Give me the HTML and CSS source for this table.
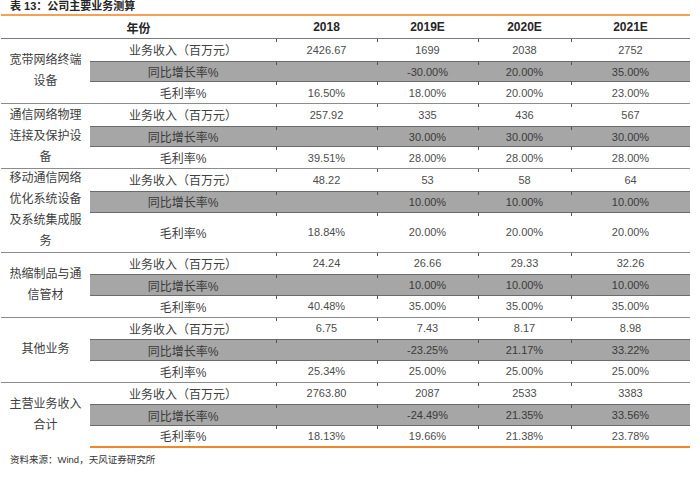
FILE: index.html
```html
<!DOCTYPE html>
<html lang="zh">
<head>
<meta charset="utf-8">
<title>公司主要业务测算</title>
<link rel="stylesheet" href="styles.css">
</head>
<body>
<div class="report">
  <div class="caption">表 13：公司主要业务测算</div>
  <div class="table">
    <div class="c hd span2">年份</div>
    <div class="c hd num">2018</div>
    <div class="c hd num">2019E</div>
    <div class="c hd num">2020E</div>
    <div class="c hd num">2021E</div>

    <div class="c grp"><span>宽带网络终端<br>设备</span></div>
    <div class="c lbl">业务收入（百万元）</div>
    <div class="c v">2426.67</div><div class="c v">1699</div><div class="c v">2038</div><div class="c v">2752</div>
    <div class="c lbl gray">同比增长率%</div>
    <div class="c v gray"></div><div class="c v gray">-30.00%</div><div class="c v gray">20.00%</div><div class="c v gray">35.00%</div>
    <div class="c lbl end">毛利率%</div>
    <div class="c v end">16.50%</div><div class="c v end">18.00%</div><div class="c v end">20.00%</div><div class="c v end">23.00%</div>

    <div class="c grp"><span>通信网络物理<br>连接及保护设<br>备</span></div>
    <div class="c lbl">业务收入（百万元）</div>
    <div class="c v">257.92</div><div class="c v">335</div><div class="c v">436</div><div class="c v">567</div>
    <div class="c lbl gray">同比增长率%</div>
    <div class="c v gray"></div><div class="c v gray">30.00%</div><div class="c v gray">30.00%</div><div class="c v gray">30.00%</div>
    <div class="c lbl end">毛利率%</div>
    <div class="c v end">39.51%</div><div class="c v end">28.00%</div><div class="c v end">28.00%</div><div class="c v end">28.00%</div>

    <div class="c grp"><span>移动通信网络<br>优化系统设备<br>及系统集成服<br>务</span></div>
    <div class="c lbl">业务收入（百万元）</div>
    <div class="c v">48.22</div><div class="c v">53</div><div class="c v">58</div><div class="c v">64</div>
    <div class="c lbl gray">同比增长率%</div>
    <div class="c v gray"></div><div class="c v gray">10.00%</div><div class="c v gray">10.00%</div><div class="c v gray">10.00%</div>
    <div class="c lbl end">毛利率%</div>
    <div class="c v end">18.84%</div><div class="c v end">20.00%</div><div class="c v end">20.00%</div><div class="c v end">20.00%</div>

    <div class="c grp"><span>热缩制品与通<br>信管材</span></div>
    <div class="c lbl">业务收入（百万元）</div>
    <div class="c v">24.24</div><div class="c v">26.66</div><div class="c v">29.33</div><div class="c v">32.26</div>
    <div class="c lbl gray">同比增长率%</div>
    <div class="c v gray"></div><div class="c v gray">10.00%</div><div class="c v gray">10.00%</div><div class="c v gray">10.00%</div>
    <div class="c lbl end">毛利率%</div>
    <div class="c v end">40.48%</div><div class="c v end">35.00%</div><div class="c v end">35.00%</div><div class="c v end">35.00%</div>

    <div class="c grp"><span>其他业务</span></div>
    <div class="c lbl">业务收入（百万元）</div>
    <div class="c v">6.75</div><div class="c v">7.43</div><div class="c v">8.17</div><div class="c v">8.98</div>
    <div class="c lbl gray">同比增长率%</div>
    <div class="c v gray"></div><div class="c v gray">-23.25%</div><div class="c v gray">21.17%</div><div class="c v gray">33.22%</div>
    <div class="c lbl end">毛利率%</div>
    <div class="c v end">25.34%</div><div class="c v end">25.00%</div><div class="c v end">25.00%</div><div class="c v end">25.00%</div>

    <div class="c grp last"><span>主营业务收入<br>合计</span></div>
    <div class="c lbl">业务收入（百万元）</div>
    <div class="c v">2763.80</div><div class="c v">2087</div><div class="c v">2533</div><div class="c v">3383</div>
    <div class="c lbl gray">同比增长率%</div>
    <div class="c v gray"></div><div class="c v gray">-24.49%</div><div class="c v gray">21.35%</div><div class="c v gray">33.56%</div>
    <div class="c lbl fin">毛利率%</div>
    <div class="c v fin">18.13%</div><div class="c v fin">19.66%</div><div class="c v fin">21.38%</div><div class="c v fin">23.78%</div>
  </div>
  <div class="source">资料来源：Wind，天风证券研究所</div>
</div>
</body>
</html>
```

FILE: styles.css
```css
* { box-sizing: border-box; }

body {
  margin: 0;
  background: #ffffff;
  font-family: "Liberation Sans", "Noto Sans CJK SC", sans-serif;
  color: #404040;
}

.report {
  width: 700px;
  padding: 0 10px 0 1px;
}

.caption {
  height: 14px;
  line-height: 13px;
  padding-left: 9px;
  font-size: 11px;
  font-weight: bold;
  color: #262626;
}

.table {
  display: grid;
  width: 689px;
  grid-template-columns: 89px 186px 101px 101px 93px 119px;
  grid-template-rows: 23px repeat(8, 21.7px) 40px repeat(9, 21.7px);
  border-top: 2px solid #f4a055;
}

.c {
  display: flex;
  align-items: center;
  justify-content: center;
  white-space: nowrap;
}

.hd {
  font-size: 12px;
  font-weight: bold;
  color: #262626;
  border-bottom: 1px solid #7a7a7a;
}

.span2 { grid-column: span 2; }

.grp {
  grid-row: span 3;
  font-size: 12px;
  line-height: 21px;
  text-align: center;
  color: #404040;
  border-bottom: 1px solid #8c8c8c;
}

.grp.last { border-bottom: none; }

.lbl {
  font-size: 12px;
  color: #404040;
}

.v {
  position: relative;
  font-size: 11px;
  color: #4d4d4d;
}

.v::before {
  content: "";
  position: absolute;
  left: 0;
  top: 0;
  width: 1px;
  height: 3px;
  background: #555555;
}

.gray {
  background: #a6a6a6;
  border-top: 1px solid #6b6b6b;
  border-bottom: 1px solid #6b6b6b;
  color: #3a3a3a;
}

.gray.v::after {
  content: "";
  position: absolute;
  left: 0;
  bottom: -3px;
  width: 1px;
  height: 3px;
  background: #555555;
}

.end { border-bottom: 1px solid #8c8c8c; }

.fin { border-bottom: 2px solid #f0882a; }

.source {
  margin-top: 6px;
  padding-left: 9px;
  font-size: 9.5px;
  line-height: 12px;
  color: #333333;
}
```
